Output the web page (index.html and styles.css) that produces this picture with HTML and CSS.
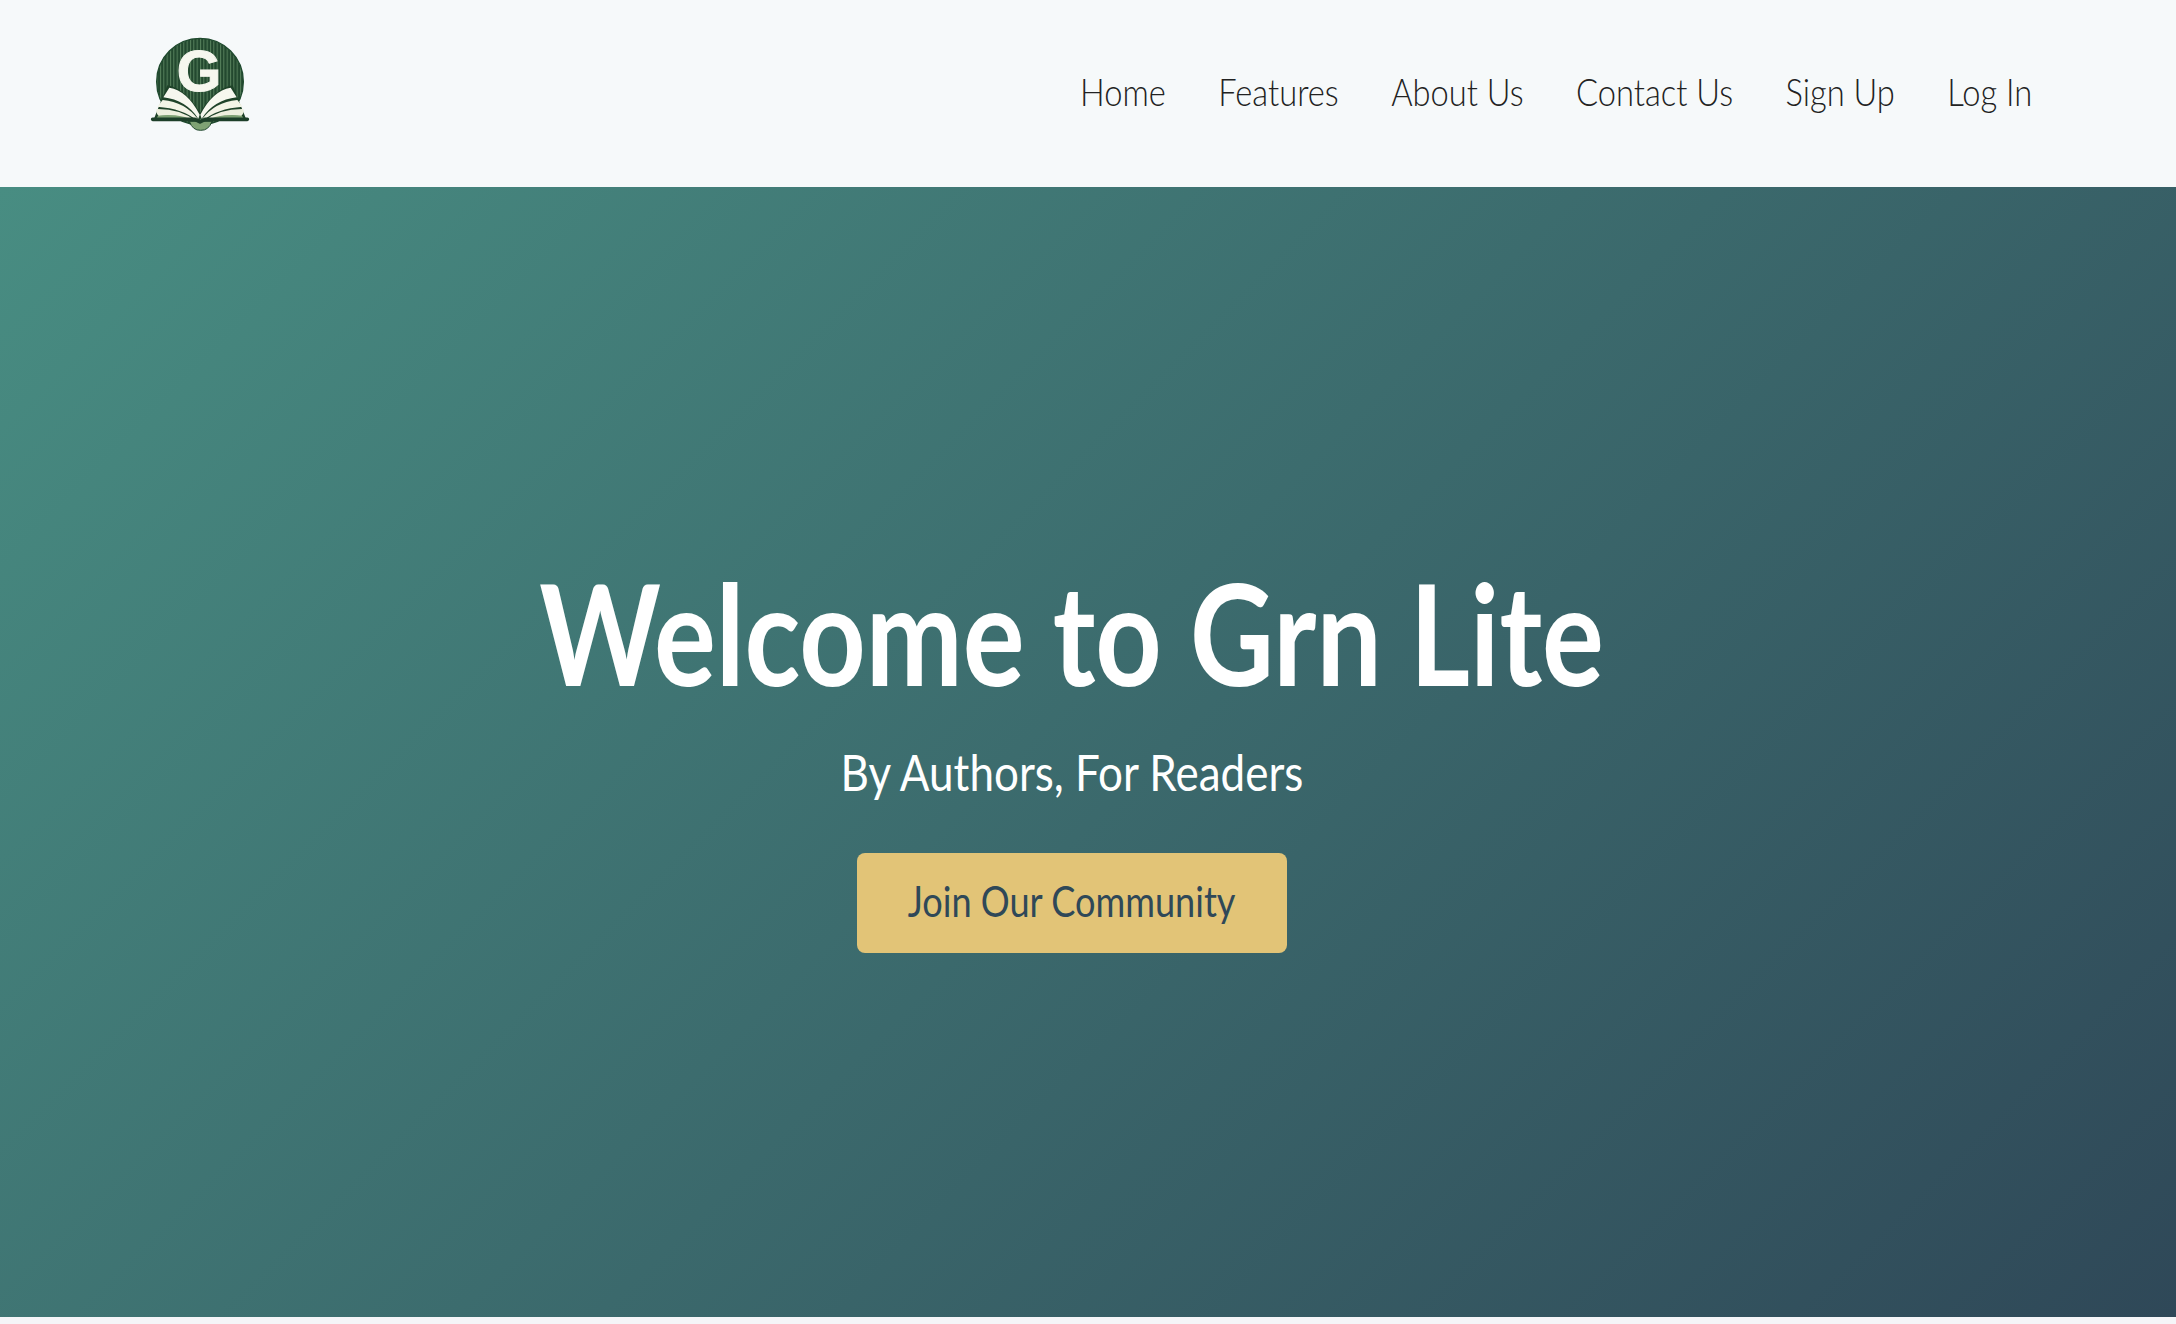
FILE: index.html
```html
<!DOCTYPE html>
<html>
<head>
    <title>Grn Lite</title>
    <link rel="stylesheet" href="styles.css">
</head>
<body>
    <header class="site-header">
        <a class="logo" href="#">
            <svg viewBox="0 0 420 375" width="140" height="125">
                <defs>
                    <pattern id="stripes" width="10" height="10" patternUnits="userSpaceOnUse">
                        <rect width="10" height="10" fill="#23492f"/>
                        <rect width="3" height="10" fill="#56805c"/>
                    </pattern>
                    <g id="pages">
                        <path d="M118 203 Q172 212 209 284 L205 296 Q168 240 100 232 Z" fill="#f6f7ee"/>
                        <path d="M98 240 Q166 246 204 298 L200 301 Q160 266 82 260 Z" fill="#f3f4e6"/>
                        <path d="M80 267 Q150 266 196 302 Q150 284 86 288 Q76 278 80 267 Z" fill="#eef0de"/>
                        <path d="M84 287 Q150 280 192 303 L78 298 Z" fill="#7fa274"/>
                    </g>
                </defs>
                <circle cx="210" cy="185" r="130" fill="url(#stripes)" stroke="#1f4a2e" stroke-width="4"/>
                <text class="logo-letter" x="207" y="214" text-anchor="middle">G</text>
                <path d="M112 196 Q165 205 210 278 Q255 205 308 196 L348 296 L72 296 Z" fill="#1f4329"/>
                <use href="#pages"/>
                <use href="#pages" transform="translate(420 0) scale(-1 1)"/>
                <path d="M178 304 Q188 332 212 331 Q236 332 246 304 Z" fill="#7fa274" stroke="#234a30" stroke-width="3"/>
                <path d="M68 298 L195 298 L210 306 L225 298 L352 298" fill="none" stroke="#1d3f29" stroke-width="11" stroke-linecap="round" stroke-linejoin="round"/>
            </svg>
        </a>
        <nav class="main-nav">
            <a href="#">Home</a>
            <a href="#">Features</a>
            <a href="#">About Us</a>
            <a href="#">Contact Us</a>
            <a href="#">Sign Up</a>
            <a href="#">Log In</a>
        </nav>
    </header>

    <section class="hero">
        <h1 class="hero-title">Welcome to Grn Lite</h1>
        <p class="hero-sub">By Authors, For Readers</p>
        <a class="hero-btn" href="#"><span>Join Our Community</span></a>
    </section>
</body>
</html>
```

FILE: styles.css
```css
/* General body styles */
body {
    font-family: 'Lato', 'Liberation Sans', sans-serif;
    color: #333;
    background-color: #f5f5f8;
    margin: 0;
    height: 1324px;
    overflow: hidden;
}

a {
    text-decoration: none;
}

/* Header styles */
.site-header {
    height: 187px;
    display: flex;
    justify-content: space-between;
    align-items: center;
    padding: 0 144px 0 130px;
    background-color: #f6f9fa;
}

.logo {
    display: block;
    height: 125px;
    margin-bottom: 22px;
}

.logo-letter {
    font-family: 'Liberation Sans', sans-serif;
    font-size: 172px;
    font-weight: 700;
    fill: #f6f7ee;
    stroke: #f6f7ee;
    stroke-width: 3px;
}

/* Nav is narrowed as one group, the installed font runs wider */
.main-nav {
    display: flex;
    gap: 61px;
    margin-bottom: 6px;
    transform: scaleX(0.86);
    transform-origin: right center;
}

.main-nav a {
    color: #222;
    font-size: 38px;
    font-weight: 300;
    line-height: 46px;
    white-space: nowrap;
}

/* Hero styles */
.hero {
    height: 1130px;
    display: flex;
    flex-direction: column;
    align-items: center;
    justify-content: center;
    padding-right: 32px;
    box-sizing: border-box;
    background: linear-gradient(135deg, #488d82 0%, #2f4858 100%);
    color: #fff;
}

.hero-title {
    margin: 0 0 30px;
    font-size: 140px;
    line-height: 160px;
    font-weight: 700;
    white-space: nowrap;
    transform: scaleX(0.827);
}

.hero-sub {
    margin: 0 0 51px;
    font-size: 50px;
    line-height: 60px;
    white-space: nowrap;
    transform: scaleX(0.88);
}

.hero-btn {
    width: 430px;
    height: 100px;
    display: flex;
    align-items: center;
    justify-content: center;
    border-radius: 8px;
    background-color: #e2c477;
    color: #2f4858;
    font-size: 42px;
    white-space: nowrap;
}

.hero-btn span {
    margin-bottom: 4px;
    transform: scaleX(0.86);
}
```
